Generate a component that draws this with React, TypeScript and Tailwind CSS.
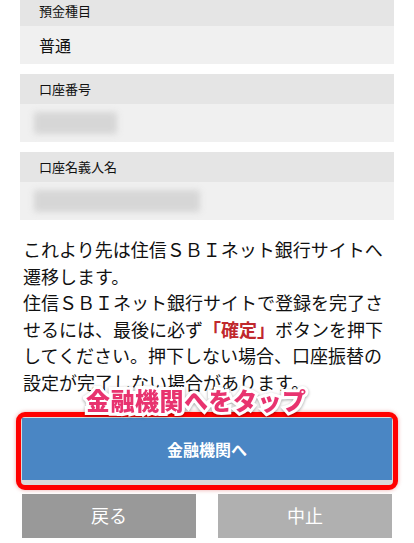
import React from "react";

const jp = { fontFamily: '"Noto Sans CJK JP", "Noto Sans", sans-serif' };

type FieldProps = {
  label: string;
  value?: string;
  maskWidth?: string;
  first?: boolean;
};

const Field: React.FC<FieldProps> = ({ label, value, maskWidth, first }) => (
  <div className={first ? "-mt-[4px]" : "mt-[10px]"}>
    <div className="flex h-[30px] items-center bg-[#e5e5e5] pl-[19px] text-[13px] text-[#111]">
      {label}
    </div>
    <div className="flex h-[38px] items-center bg-[#f0f0f0] pl-[19px] text-[16px] text-[#111]">
      {value ? (
        value
      ) : (
        <div className={`-ml-[5px] h-[22px] rounded-[2px] bg-[#d6d6d6] blur-[3px] ${maskWidth}`} />
      )}
    </div>
  </div>
);

export default function App() {
  return (
    <div className="h-[543px] w-[414px] overflow-hidden bg-white" style={jp}>
      <div className="px-[20px]">
        <Field label="預金種目" value="普通" first />
        <Field label="口座番号" maskWidth="w-[83px]" />
        <Field label="口座名義人名" maskWidth="w-[166px]" />

        <p className="mt-[16px] pl-[3px] text-[18px] leading-[26.6px] text-[#111]">
          これより先は住信ＳＢＩネット銀行サイトへ
          <br />
          遷移します。
          <br />
          住信ＳＢＩネット銀行サイトで登録を完了さ
          <br />
          せるには、最後に必ず
          <span className="font-bold text-[#c0282d]">「確定」</span>
          ボタンを押下
          <br />
          してください。押下しない場合、口座振替の
          <br />
          設定が完了しない場合があります。
        </p>
      </div>

      {/* highlighted primary action */}
      <div className="relative mx-[16px] mt-[16px]">
        <div className="rounded-[9px] border-[5px] border-[#ff0000] bg-[#dadada] p-[1px] pb-[5px] shadow-[0_0_4px_rgba(200,0,0,0.35)]">
          <button className="flex h-[62px] w-full items-center justify-center bg-[#4a86c4] text-[16px] font-bold text-white">
            金融機関へ
          </button>
        </div>
        <div className="absolute -top-[27px] left-[70px] whitespace-nowrap text-[24px] font-black leading-[30px] tracking-[0.5px] text-[#e8336f] [-webkit-text-stroke:6px_#ffffff] [paint-order:stroke_fill] drop-shadow-[0_1px_1.5px_rgba(0,0,0,0.35)]">
          金融機関へをタップ
        </div>
      </div>

      <div className="mt-[4px] flex gap-[22px] px-[22px]">
        <button className="flex h-[44px] flex-1 items-center justify-center bg-[#999999] text-[18px] text-white">
          戻る
        </button>
        <button className="flex h-[44px] flex-1 items-center justify-center bg-[#b0b0b0] text-[18px] text-white">
          中止
        </button>
      </div>
    </div>
  );
}
